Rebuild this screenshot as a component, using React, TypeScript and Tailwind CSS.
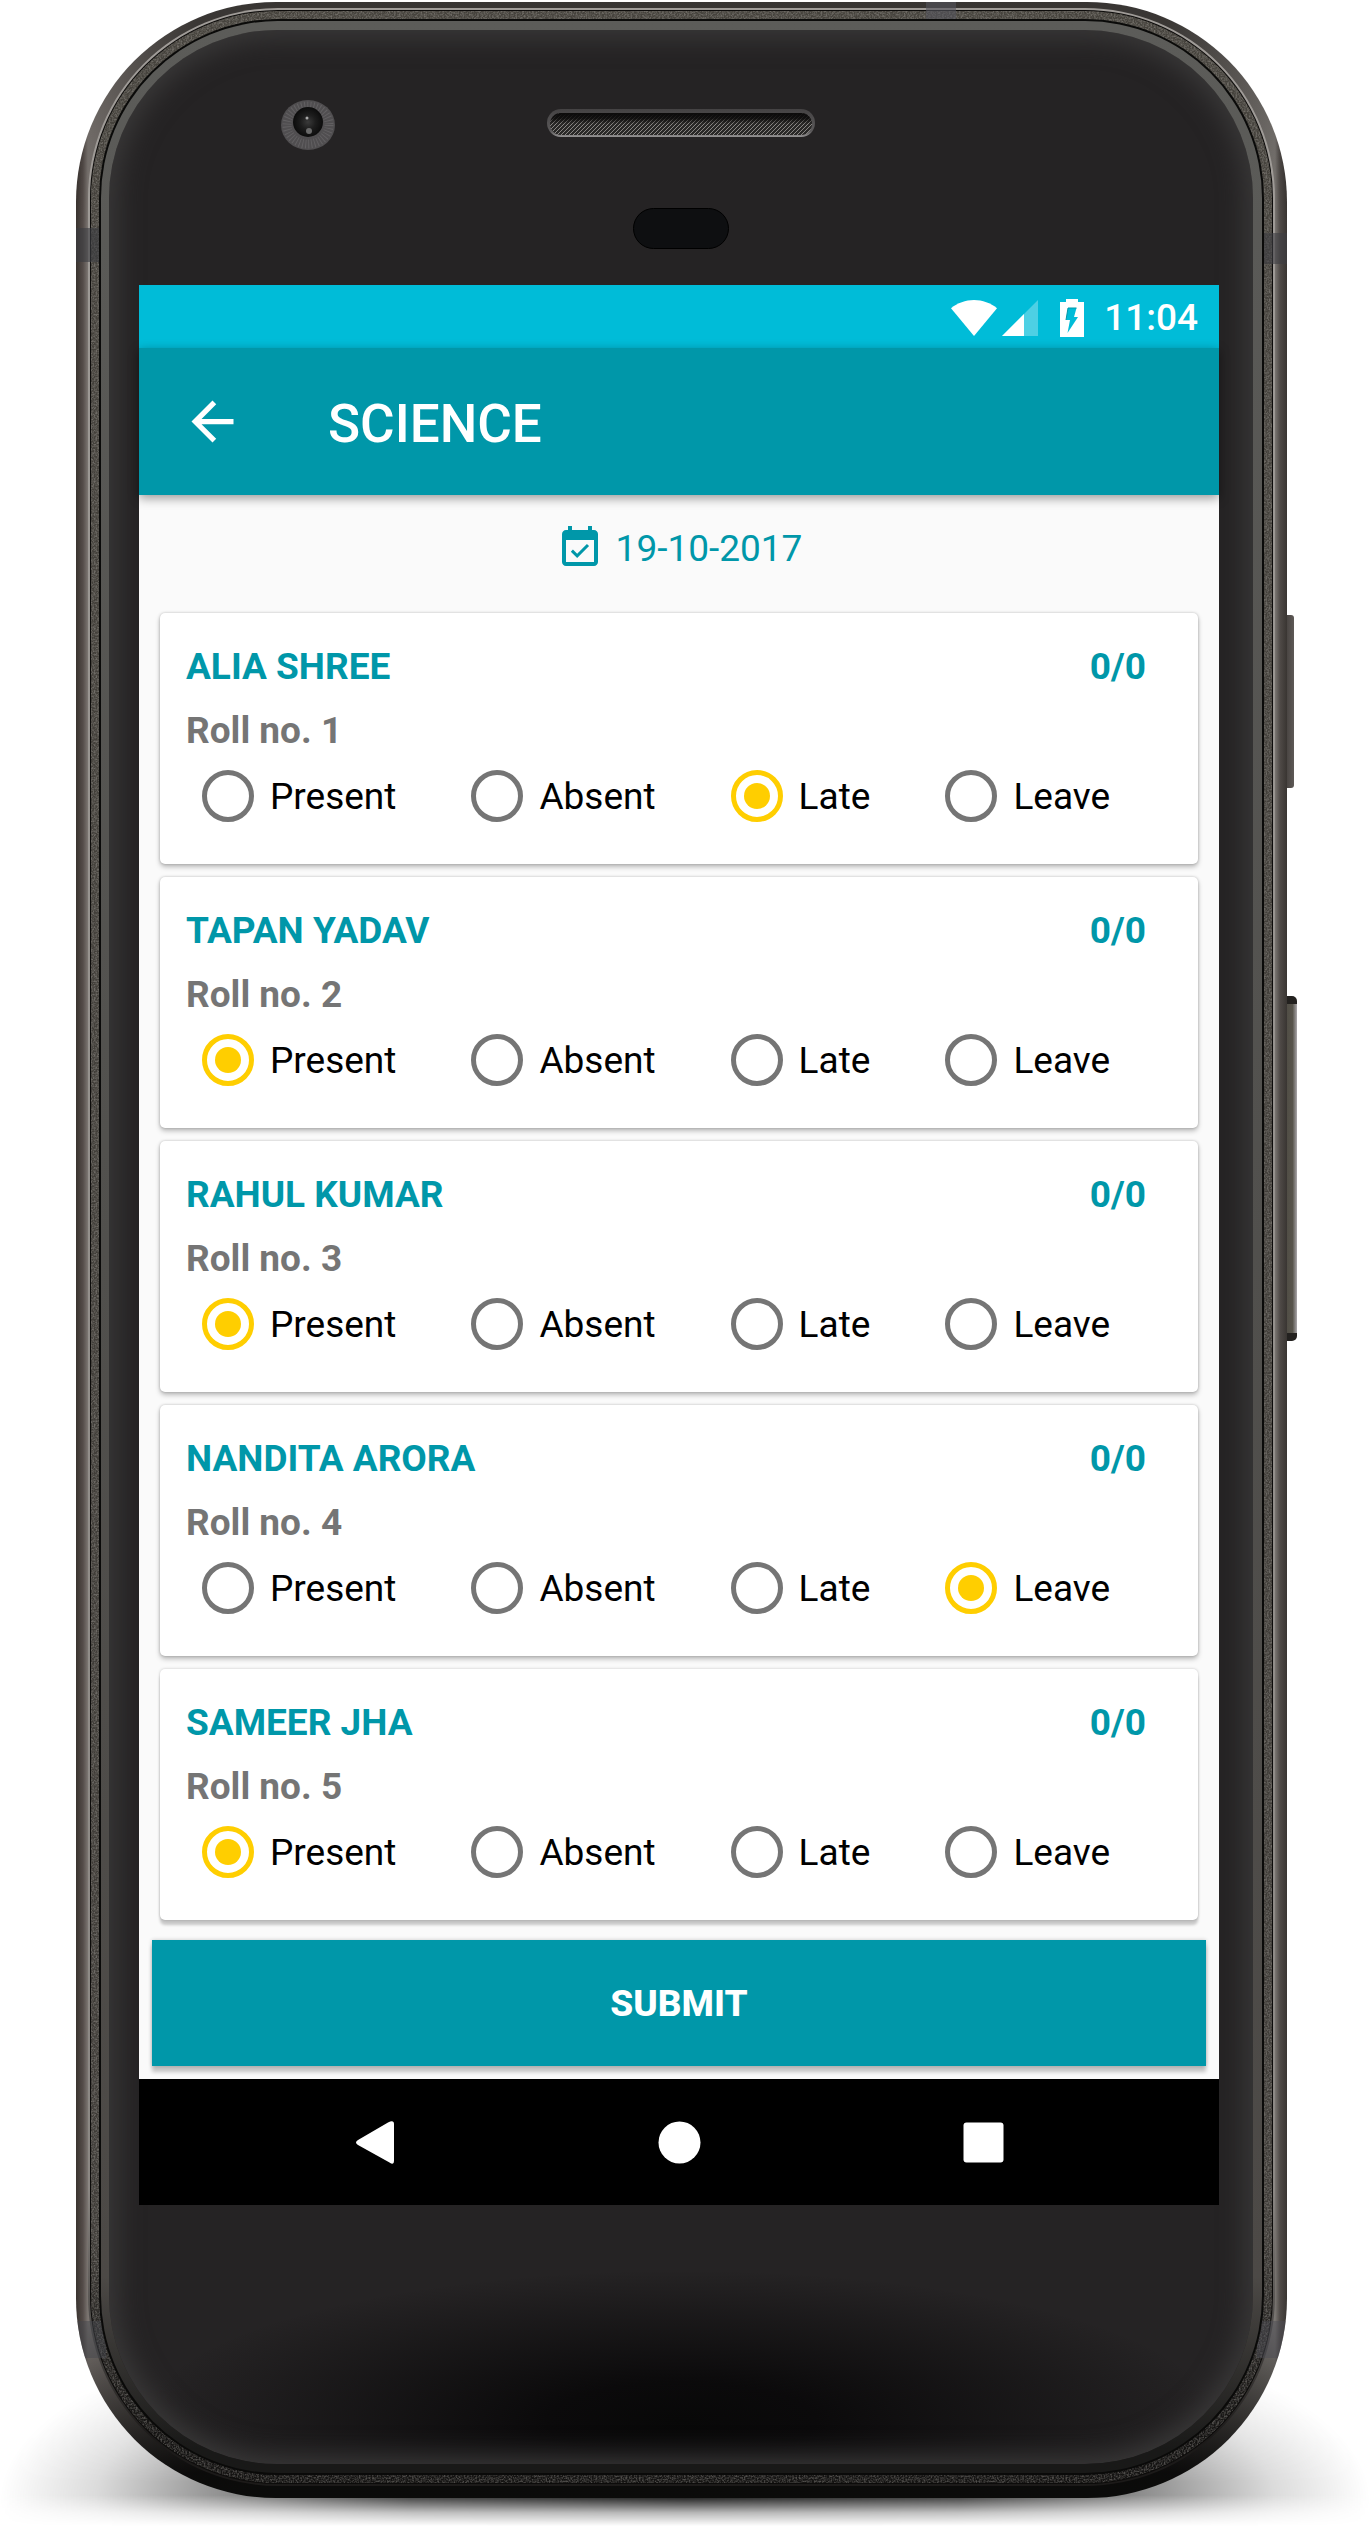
import { useState } from "react";

type Status = "Present" | "Absent" | "Late" | "Leave";

interface Student {
  name: string;
  roll: number;
  score: string;
  status: Status;
}

const STATUSES: Status[] = ["Present", "Absent", "Late", "Leave"];

const STUDENTS: Student[] = [
  { name: "ALIA SHREE", roll: 1, score: "0/0", status: "Late" },
  { name: "TAPAN YADAV", roll: 2, score: "0/0", status: "Present" },
  { name: "RAHUL KUMAR", roll: 3, score: "0/0", status: "Present" },
  { name: "NANDITA ARORA", roll: 4, score: "0/0", status: "Leave" },
  { name: "SAMEER JHA", roll: 5, score: "0/0", status: "Present" },
];

function StatusBar() {
  return (
    <div className="flex h-[63px] items-center justify-end bg-[#00bcd8] pt-[2px] pr-[21px] text-white">
      <svg className="h-[36px] w-[46px]" viewBox="0 0 46 36" fill="currentColor" aria-label="Wi-Fi">
        <path d="M23 36 0 8.200C6.500 3 14.500 0 23 0s16.500 3 23 8.200z" />
      </svg>
      <svg className="ml-[5px] h-[36px] w-[36px]" viewBox="0 0 36 36" fill="currentColor" aria-label="Signal">
        <path d="M0 36 36 0v36z" opacity=".3" />
        <path d="M0 36 22 14v22z" />
      </svg>
      <svg className="ml-[22px] h-[38px] w-[24px]" viewBox="0 0 24 38" aria-label="Battery charging">
        <path d="M6 0h12v3h6v35H0V3h6z" fill="#fff" />
        <path d="M8 9h8.500l-2.500 9h4L7.500 34l2.500-13H6z" fill="#00bcd8" />
        <path d="M8 9h8.500M8 9 6 21" fill="none" stroke="#0097a7" strokeWidth="1" />
      </svg>
      <span className="ml-5 text-[37px] leading-[43px] font-medium">11:04</span>
    </div>
  );
}

function AppBar() {
  return (
    <header className="relative z-10 flex h-[147px] items-center gap-[84px] bg-[#0097a9] pl-[42px] text-white shadow-[0_3px_10px_rgba(0,0,0,0.4)]">
      <button type="button" aria-label="Back">
        <svg className="size-[63px]" viewBox="0 0 24 24" fill="currentColor">
          <path d="M20 11H7.830l5.590-5.590L12 4l-8 8 8 8 1.410-1.410L7.830 13H20v-2z" />
        </svg>
      </button>
      <h1 className="pt-1 text-[53px] leading-[62px] font-medium">SCIENCE</h1>
    </header>
  );
}

function DateRow() {
  return (
    <div className="flex items-center justify-center gap-3 pt-[29px] pb-[41px] text-[#0097a9]">
      <svg className="size-[48px]" viewBox="0 0 24 24" fill="currentColor" aria-hidden="true">
        <path d="M16.530 11.060 15.470 10l-4.880 4.880-2.120-2.120-1.060 1.060L10.590 17l5.940-5.940zM19 3h-1V1h-2v2H8V1H6v2H5c-1.110 0-1.990.9-1.990 2L3 19c0 1.100.89 2 2 2h14c1.100 0 2-.9 2-2V5c0-1.100-.9-2-2-2zm0 16H5V8h14v11z" />
      </svg>
      <time dateTime="2017-10-19" className="text-[37px] leading-[43px]">19-10-2017</time>
    </div>
  );
}

function StudentCard({ student }: { student: Student }) {
  const [status, setStatus] = useState<Status>(student.status);
  return (
    <li className="rounded-[5px] bg-white pt-8 pr-[52px] pb-[42px] pl-[26px] text-[37px] leading-[43px] shadow-[0_3px_5px_rgba(0,0,0,0.25),0_0_3px_rgba(0,0,0,0.22)] last:shadow-[0_5px_3px_rgba(0,0,0,0.2),0_0_3px_rgba(0,0,0,0.22)]">
      <div className="flex justify-between font-bold text-[#0097a9]">
        <h2>{student.name}</h2>
        <span>{student.score}</span>
      </div>
      <p className="mt-[21px] font-bold text-[#757575]">Roll no. {student.roll}</p>
      <div role="radiogroup" aria-label={student.name} className="mt-[18px] flex gap-[59px]">
        {STATUSES.map((option) => (
          <label key={option} className="flex items-center gap-4 pl-4 text-black">
            <input
              type="radio"
              name={`attendance-${student.roll}`}
              checked={status === option}
              onChange={() => setStatus(option)}
              className="flex size-[52px] shrink-0 appearance-none items-center justify-center rounded-full border-5 border-[#757575] before:size-[26px] before:rounded-full before:bg-transparent checked:border-[#ffce00] checked:before:bg-[#ffce00]"
            />
            {option}
          </label>
        ))}
      </div>
    </li>
  );
}

function NavBar() {
  return (
    <nav className="flex h-[126px] items-center justify-center gap-[241px] bg-black text-white">
      <button type="button" aria-label="Back">
        <svg className="size-[63px]" viewBox="0 0 63 63" fill="currentColor">
          <path d="M14 29 44 11.500Q50 8.500 50 13V50Q50 54.500 45.500 51.500L14 34Q10 31.500 14 29z" />
        </svg>
      </button>
      <button type="button" aria-label="Home">
        <svg className="size-[63px]" viewBox="0 0 63 63" fill="currentColor">
          <circle cx="31.500" cy="31.500" r="21" />
        </svg>
      </button>
      <button type="button" aria-label="Overview">
        <svg className="size-[63px]" viewBox="0 0 63 63" fill="currentColor">
          <rect x="11.500" y="11.500" width="40" height="40" rx="3" />
        </svg>
      </button>
    </nav>
  );
}

function Screen() {
  return (
    <main className="ml-[30px] mr-[34px] bg-[#fafafa]">
      <StatusBar />
      <AppBar />
      <DateRow />
      <ul className="flex flex-col gap-[13px] px-[21px]">
        {STUDENTS.map((student) => (
          <StudentCard key={student.roll} student={student} />
        ))}
      </ul>
      <div className="px-[13px] pt-5 pb-[13px]">
        <button
          type="button"
          className="block h-[126px] w-full bg-[#0097a9] text-[37px] leading-[43px] font-extrabold text-white shadow-[0_6px_4px_rgba(0,0,0,0.22),0_0_4px_rgba(0,0,0,0.2)]"
        >
          SUBMIT
        </button>
      </div>
      <NavBar />
    </main>
  );
}

function TopBezel() {
  return (
    <div className="grid h-[255px] grid-cols-[1fr_268px_1fr] grid-rows-[108px_41px] content-start pt-[70px]">
      <svg className="ml-[172px] size-[54px]" viewBox="0 0 54 54" aria-hidden="true">
        <defs>
          <radialGradient id="lens">
            <stop offset="0" stopColor="#3a3a3a" />
            <stop offset=".5" stopColor="#1d1d1d" />
            <stop offset="1" stopColor="#0c0c0c" />
          </radialGradient>
        </defs>
        <ellipse cx="27" cy="25" rx="27" ry="25" fill="#504e50" />
        <ellipse cx="27" cy="25" rx="21" ry="19" fill="none" stroke="#747274" strokeWidth="9" strokeDasharray="1 2" opacity=".5" />
        <circle cx="27" cy="22" r="15" fill="url(#lens)" />
        <circle cx="26" cy="18" r="1.500" fill="#aaa" />
        <circle cx="28" cy="31" r="3" fill="#6a6a6a" />
      </svg>
      <svg className="mt-[9px] h-[29px] w-full" viewBox="0 0 268 29" aria-hidden="true">
        <defs>
          <pattern id="mesh" width="4" height="4" patternUnits="userSpaceOnUse">
            <rect width="4" height="4" fill="#2a2928" />
            <path d="M-1 5 5-1M-1 1 1-1M3 5 5 3" stroke="#8a8784" strokeWidth="1" />
          </pattern>
          <linearGradient id="meshShade" x1="0" y1="0" x2="0" y2="1">
            <stop offset="0" stopColor="#0b0a0a" />
            <stop offset=".25" stopColor="#0b0a0a" stopOpacity=".8" />
            <stop offset=".5" stopColor="#0b0a0a" stopOpacity="0" />
          </linearGradient>
          <linearGradient id="slotRim" x1="0" y1="0" x2="0" y2="1">
            <stop offset="0" stopColor="#444243" />
            <stop offset=".8" stopColor="#5c5a5b" />
            <stop offset="1" stopColor="#969494" />
          </linearGradient>
        </defs>
        <rect width="268" height="28" rx="14" fill="url(#slotRim)" />
        <rect x="3" y="4" width="262" height="22" rx="11" fill="url(#mesh)" />
        <rect x="3" y="4" width="262" height="22" rx="11" fill="url(#meshShade)" />
      </svg>
      <div className="col-start-2 row-start-2 w-[96px] justify-self-center rounded-full border border-black bg-[#0e0f11]" />
    </div>
  );
}

function MetalGrain() {
  return (
    <svg className="absolute inset-0 h-full w-full opacity-35" aria-hidden="true">
      <filter id="grain">
        <feTurbulence type="fractalNoise" baseFrequency="0.6" numOctaves="2" seed="4" />
        <feColorMatrix values="0 0 0 0 0.5  0 0 0 0 0.48  0 0 0 0 0.45  2.5 0 0 0 -0.9" />
      </filter>
      <rect width="100%" height="100%" filter="url(#grain)" />
    </svg>
  );
}

export default function App() {
  return (
    <div className="relative isolate overflow-hidden bg-white pt-[2px] pr-[83px] pb-9 pl-[76px] font-['Roboto',sans-serif]">
      {/* Shadow the phone casts on the ground */}
      <div className="absolute inset-x-0 bottom-2 -z-10 h-[220px] bg-[radial-gradient(ellipse_50%_100%_at_50%_88%,rgba(0,0,0,0.95)_0%,rgba(0,0,0,0.8)_40%,rgba(0,0,0,0.4)_70%,rgba(0,0,0,0.14)_86%,transparent_100%)] [mask-image:linear-gradient(to_bottom,transparent,black_80%,black_86%,rgba(0,0,0,0.3)_94%,transparent)]" />

      <div className="relative">
        {/* Power and volume keys */}
        <div className="absolute top-[613px] -right-[7px] h-[173px] w-[12px] rounded-r-[3px] bg-linear-to-r from-[#3c3836] to-[#5e5956]" />
        <div className="absolute top-[994px] -right-[10px] h-[345px] w-[15px] rounded-r-[5px] border-y-8 border-[#23211f] bg-linear-to-r from-[#4b4841] via-[#57544b] via-70% to-[#a9a6aa]" />

        {/* Metal rim */}
        <div className="relative isolate overflow-hidden rounded-[200px] bg-[linear-gradient(to_bottom,rgba(0,0,0,0.25)_0,transparent_9%,transparent_93%,rgba(0,0,0,0.85)_99%),linear-gradient(to_right,#39332f_0,#544c49_7px,#7c7672_12px,#4b4744_120px,#4b4744_calc(100%-120px),#7a7672_calc(100%-12px),#4f4a47_calc(100%-7px),#393532_100%)] px-3 pt-[6px] pb-3">
          <div className="absolute top-[226px] left-0 z-[5] h-[34px] w-[24px] bg-[#3a3c41]/60" />
          <div className="absolute top-[231px] right-0 z-[5] h-[31px] w-[24px] bg-[#3e3e43]/60" />
          <div className="absolute top-0 left-[850px] z-[5] h-[18px] w-[30px] bg-[#55555d]/60" />
          <div className="absolute bottom-[140px] left-0 z-[5] h-[37px] w-[30px] bg-[#44464b]/50" />
          <div className="absolute right-0 bottom-[140px] z-[5] h-[37px] w-[30px] bg-[#4c4c54]/50" />

          <div className="rounded-[190px] bg-[linear-gradient(to_bottom,#a09c98_0,#8c8884_88%,#1c1a19_98%)] p-[2px]">
            <div className="rounded-[188px] bg-[#0c0b0a] p-px">
              <div className="relative overflow-hidden rounded-[187px] bg-[linear-gradient(to_bottom,#45423c_0,#3e3b37_90%,#141312_98%)] p-2">
                <MetalGrain />
                <div className="relative z-10 rounded-[179px] bg-[#0a0a09] p-[2px]">
                  <div className="rounded-[177px] bg-[linear-gradient(to_bottom,#5c5c59_0,#51504d_50%,#4c4946_92%,#191918_99%)] py-[9px] pr-[9px] pl-2">
                    <div className="rounded-[168px] bg-[radial-gradient(ellipse_540px_150px_at_50%_calc(100%-44px),#080808_0%,#0b0a0b_25%,transparent_100%)] bg-[#252324] pb-[259px] shadow-[inset_0_0_26px_8px_#3a3939]">
                      <TopBezel />
                      <Screen />
                    </div>
                  </div>
                </div>
              </div>
            </div>
          </div>
        </div>
      </div>
    </div>
  );
}
